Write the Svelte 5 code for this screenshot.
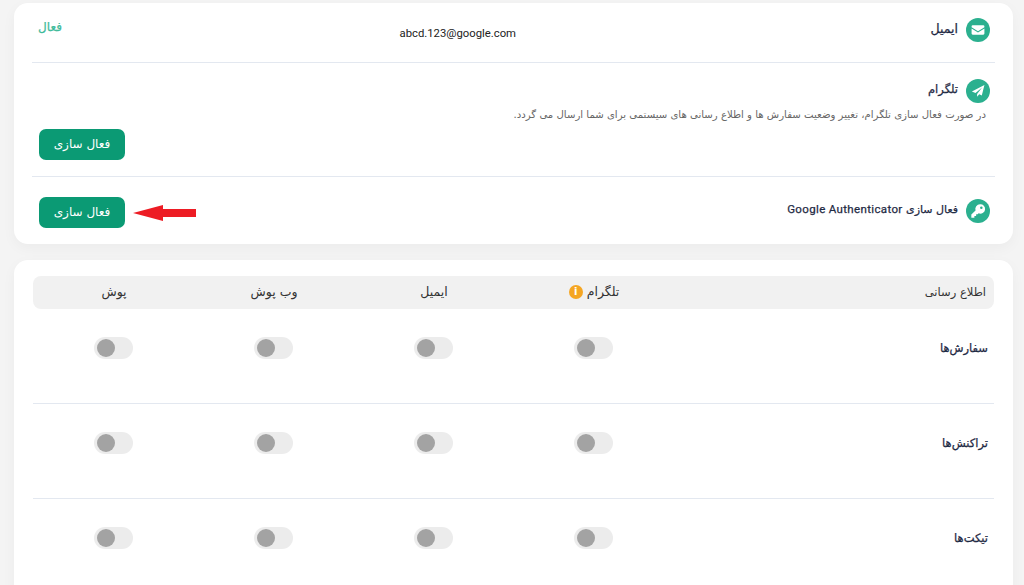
<script>
	const rows = ['سفارش‌ها', 'تراکنش‌ها', 'تیکت‌ها'];
	const channels = [0, 1, 2, 3];
</script>

<div class="page" dir="rtl">
	<section class="card top">
		<div class="item email">
			<div class="heading">
				<span class="icon">
					<svg viewBox="0 0 24 24" width="14" height="14"><path d="M1 7.2 12 14l11-6.8V6a2 2 0 0 0-2-2H3a2 2 0 0 0-2 2zM1 9.4V18a2 2 0 0 0 2 2h18a2 2 0 0 0 2-2V9.400L12 16.200z" fill="#fff"/></svg>
				</span>
				<h3>ایمیل</h3>
			</div>
			<span class="address">abcd.123@google.com</span>
			<span class="status">فعال</span>
		</div>

		<div class="item telegram">
			<div class="heading">
				<span class="icon">
					<svg viewBox="0 0 24 24" width="14" height="14"><path d="M23 1.500 1.500 13l6.200 2.500L19 6l-8.500 11v5l3.700-4.300 4.300 1.800z" fill="#fff"/></svg>
				</span>
				<h3>تلگرام</h3>
			</div>
			<p>در صورت فعال سازی تلگرام، تغییر وضعیت سفارش ها و اطلاع رسانی های سیستمی برای شما ارسال می گردد.</p>
			<button>فعال سازی</button>
		</div>

		<div class="item auth">
			<div class="heading">
				<span class="icon">
					<svg viewBox="0 0 24 24" width="16" height="16"><path d="M15 2a7 7 0 0 0-6.700 9.100L2 17.400V22h4.600v-2.600h2.600v-2.600h2.300l1.400-1.400A7 7 0 1 0 15 2zm2 3.200a1.900 1.900 0 1 1 0 3.800 1.900 1.900 0 0 1 0-3.800z" fill="#fff" fill-rule="evenodd"/></svg>
				</span>
				<h3>فعال سازی <span class="latin">Google Authenticator</span></h3>
			</div>
			<div class="action">
				<svg class="arrow" viewBox="0 0 63 16" width="63" height="16"><path d="M0 8 30 0v4h33v8H30v4z" fill="#ed1c24"/></svg>
				<button>فعال سازی</button>
			</div>
		</div>
	</section>

	<section class="card table">
		<div class="row head">
			<div class="name">اطلاع رسانی</div>
			<div class="col tg">
				تلگرام
				<span class="info">i</span>
			</div>
			<div class="col">ایمیل</div>
			<div class="col">وب پوش</div>
			<div class="col">پوش</div>
		</div>
		{#each rows as row}
			<div class="row body">
				<div class="name">{row}</div>
				{#each channels as c (c)}
					<div class="col"><span class="toggle"><span class="knob"></span></span></div>
				{/each}
			</div>
		{/each}
	</section>
</div>

<style>
	:global(body) {
		margin: 0;
		background: #f4f4f4;
		overflow: hidden;
	}
	.page {
		height: 585px;
		overflow: hidden;
		padding: 3px 11px 0 14px;
		box-sizing: border-box;
		font-family: "DejaVu Sans", Roboto, sans-serif;
		color: #1f2a44;
	}
	.card {
		background: #fff;
		border-radius: 14px;
		box-shadow: 0 4px 14px rgba(0, 0, 0, 0.04);
	}
	.top {
		height: 241px;
		padding: 0 18px;
		margin-bottom: 16px;
	}
	.item {
		border-bottom: 1px solid #e3e8f0;
		box-sizing: border-box;
	}
	.item:last-child {
		border-bottom: 0;
	}
	.email {
		height: 60px;
		display: grid;
		grid-template-columns: 474px auto 1fr;
		align-items: start;
		padding: 15px 5px 0 6px;
	}
	.heading {
		display: flex;
		align-items: center;
		gap: 8px;
	}
	.icon {
		width: 24px;
		height: 24px;
		border-radius: 50%;
		background: #2bb08f;
		display: flex;
		align-items: center;
		justify-content: center;
		flex: none;
	}
	h3 {
		margin: 0 0 4px;
		font-size: 11.500px;
		font-weight: 400;
		-webkit-text-stroke: 0.25px currentColor;
	}
	.email h3 {
		font-size: 12.500px;
	}
	.auth h3 {
		font-size: 11px;
	}
	.latin {
		font-family: Roboto, sans-serif;
		font-size: 11.500px;
		font-weight: 400;
		letter-spacing: 0.35px;
	}
	.address {
		font: 11.300px Roboto, sans-serif;
		padding-top: 9px;
		color: #222;
	}
	.status {
		text-align: left;
		font-size: 12px;
		color: #3fbb9b;
		-webkit-text-stroke: 0.25px currentColor;
		padding-top: 2px;
	}
	.telegram {
		height: 114px;
		padding: 16px 5px 0 7px;
	}
	.telegram p {
		margin: 6px 0 9px;
		padding-right: 4px;
		font-size: 10.150px;
		color: #666;
	}
	button {
		display: block;
		width: 86px;
		height: 31px;
		border: 0;
		border-radius: 7px;
		background: #0b9a74;
		color: #fff;
		font: 400 12px "DejaVu Sans", sans-serif;
		padding: 0 0 2px;
	}
	.telegram button {
		margin-right: auto;
	}
	.auth {
		padding: 20px 5px 0 7px;
		display: flex;
		justify-content: space-between;
		align-items: flex-start;
	}
	.auth .heading {
		padding-top: 2px;
	}
	.action {
		display: flex;
		align-items: center;
		gap: 8px;
	}
	.arrow {
		margin-top: 1px;
	}
	.table {
		padding: 16px 19px 0;
		height: 400px;
	}
	.row {
		display: grid;
		grid-template-columns: 1fr repeat(4, 160px);
	}
	.head {
		height: 33px;
		background: #f1f1f1;
		border-radius: 8px;
		align-items: center;
		font-size: 12.500px;
		color: #333;
		padding-bottom: 2px;
		box-sizing: border-box;
	}
	.head .name {
		padding-right: 8px;
		font-size: 11.500px;
	}
	.col {
		display: flex;
		justify-content: center;
		align-items: center;
		gap: 6px;
	}
	.head .col {
		padding-left: 2px;
	}
	.head .tg {
		gap: 4px;
	}
	.info {
		width: 14px;
		height: 14px;
		border-radius: 50%;
		background: #f5a623;
		color: #fff;
		font: 700 10px/14px "DejaVu Sans", sans-serif;
		text-align: center;
	}
	.body {
		height: 95px;
		border-bottom: 1px solid #e3e8f0;
		box-sizing: border-box;
		padding-top: 28px;
		align-items: start;
	}
	.body .name {
		font-size: 11.500px;
		-webkit-text-stroke: 0.25px currentColor;
		padding-right: 6px;
		padding-top: 4px;
	}
	.toggle {
		width: 39px;
		height: 22px;
		background: #ececec;
		border-radius: 11px;
		display: flex;
		align-items: center;
		justify-content: flex-end;
		padding: 0 3px;
		box-sizing: border-box;
	}
	.knob {
		width: 18.500px;
		height: 18.500px;
		border-radius: 50%;
		background: #a3a3a3;
	}
</style>
